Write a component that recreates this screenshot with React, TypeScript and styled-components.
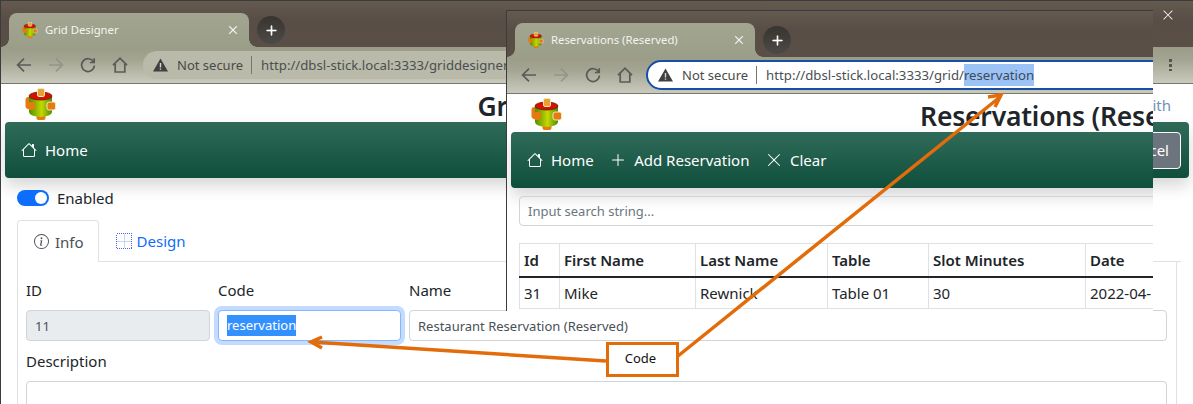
import React from "react";
import styled, { createGlobalStyle } from "styled-components";
import { BsHouse, BsInfoCircle, BsPlusLg, BsXLg } from "react-icons/bs";

const GlobalStyle = createGlobalStyle`
html, body {
    margin: 0;
    background: #fff;
    overflow: hidden;
}
* {
    box-sizing: border-box;
}
`

const Logo = ({ size }: { size: number }) => (
    <svg width={size} height={size} viewBox="0 0 32 32" style={{ flexShrink: 0 }}>
        <defs>
            <linearGradient id="body" x1="0" x2="1" y1="0" y2="0">
                <stop offset="0" stopColor="#4f8f00" />
                <stop offset="0.55" stopColor="#c4d800" />
                <stop offset="1" stopColor="#4a8c08" />
            </linearGradient>
        </defs>
        <rect x="0.5" y="9" width="7" height="12" rx="3" fill="#e57a10" />
        <rect x="11.5" y="26" width="9" height="6" rx="2" fill="#e57a10" />
        <path d="M4 8v16a11.500 5 0 0 0 23 0V8z" fill="url(#body)" />
        <ellipse cx="15.500" cy="8" rx="11.500" ry="4" fill="#d81000" stroke="#5a1000" strokeWidth="0.7" />
        <rect x="12.500" y="0.500" width="7" height="8" rx="1.500" fill="#e8a030" stroke="#f4e8c0" />
        <rect x="3" y="14" width="7" height="8" rx="2" fill="#e57a10" />
        <rect x="22" y="14" width="8.500" height="8" rx="2" fill="#e57a10" stroke="#f4e8c0" />
    </svg>
);

const ChromeIcon = ({ d, faded }: { d: string; faded?: boolean }) => (
    <svg width="18" height="18" viewBox="0 0 18 18" fill="none" stroke={faded ? "#8d8e80" : "#5a5b58"} strokeWidth="1.7" opacity={faded ? 0.75 : 1}>
        <path d={d} />
    </svg>
);

const BACK = "M16 9H3M9 2.6L2.6 9 9 15.4";
const FORWARD = "M2 9h13M9 2.6L15.4 9 9 15.4";
const RELOAD = "M14.6 6A6.4 6.4 0 1 0 15.4 9.5M15.2 2.2v4.3h-4.3";
const HOME = "M2 9.2L9 2.2l7 7M4.2 8v8h9.6V8";

const Warning = () => (
    <svg width="15" height="14" viewBox="0 0 15 14">
        <path d="M7.5 0.5L15 13.5H0z" fill="#3f4042" />
        <path d="M6.8 5h1.4v4.6H6.8zM6.8 10.4h1.4v1.4H6.8z" fill="#d8d8cc" />
    </svg>
);

const DesignIcon = () => (
    <svg width="16" height="16" viewBox="0 0 16 16" fill="none" shapeRendering="crispEdges">
        <rect x="0.5" y="0.5" width="15" height="15" stroke="#4a63f5" strokeDasharray="1 1" />
        <path d="M8 1v14M1 8h14" stroke="#c4d6f4" strokeWidth="1" />
    </svg>
);

const Window = styled.div`
width: 1193px;
height: 404px;
overflow: hidden;
position: relative;
font-family: "Noto Sans", sans-serif;
font-size: 15px;
color: #212529;
border-left: 1px solid #3c3c3c;
border-top: 1px solid #3c3c3c;
background: #fff;
`

const FrontWindow = styled.div`
position: absolute;
left: 505px;
top: 9px;
width: 647px;
height: 301px;
overflow: hidden;
background: #fff;
border-left: 1px solid #3c3c3c;
border-top: 1px solid #3c3c3c;
`

const FrontContent = styled.div`
width: 1108px;
`

const Strip = styled.div`
height: 46px;
display: flex;
align-items: flex-end;
padding-left: 8px;
background: linear-gradient(#635a50, #594e45 40%, #5a4f46);
`

const BrowserTab = styled.div`
position: relative;
width: 240px;
height: 34px;
display: flex;
align-items: center;
gap: 7px;
padding: 0 11px 0 13px;
border-radius: 8px 8px 0 0;
background: linear-gradient(#a2a590, #9b9e89);
color: #f4f4ee;
font-size: 11.3px;
&::before, &::after {
    content: "";
    position: absolute;
    bottom: 0;
    width: 8px;
    height: 8px;
}
&::before {
    left: -8px;
    background: radial-gradient(circle at 0 0, transparent 7.5px, #9b9e89 8px);
}
&::after {
    right: -8px;
    background: radial-gradient(circle at 100% 0, transparent 7.5px, #9b9e89 8px);
}
`

const TabTitle = styled.span`
flex: 1;
padding-bottom: 2px;
white-space: nowrap;
`

const TabClose = styled.span`
display: flex;
color: #fff;
font-size: 10px;
svg {
    stroke: currentColor;
    stroke-width: 0.8px;
}
`

const NewTab = styled.div`
width: 28px;
height: 28px;
margin: 0 0 3px 8px;
border-radius: 50%;
display: flex;
align-items: center;
justify-content: center;
background: linear-gradient(#38342f, #4c4a48);
color: #fff;
font-size: 13px;
svg {
    stroke: currentColor;
    stroke-width: 1px;
}
`

const WindowClose = styled.div`
align-self: flex-start;
display: flex;
margin: 8px 19px 0 auto;
color: #fff;
font-size: 12px;
`

const Toolbar = styled.div<{ $front?: boolean }>`
height: 37px;
display: flex;
align-items: center;
gap: 14px;
padding: 0 0 1px ${p => p.$front ? 13 : 14}px;
background: linear-gradient(#9a9c88, #a3a592 35%, #c9cabc);
border-bottom: 1px solid #77786c;
font-size: 13.2px;
color: #4a4a48;
`

const Omnibox = styled.div<{ $front?: boolean }>`
flex: ${p => p.$front ? "none" : 1};
width: ${p => p.$front ? "700px" : "auto"};
height: ${p => p.$front ? 30 : 28}px;
margin-left: ${p => p.$front ? -2 : 0}px;
display: flex;
align-items: center;
padding-left: 10px;
border-radius: 15px;
background: ${p => p.$front ? "#fff" : "#b9baa9"};
border: ${p => p.$front ? "2px solid #174ea6" : "none"};
white-space: nowrap;
`

const NotSecure = styled.span`
margin-left: 9px;
padding-right: 8px;
margin-right: 9px;
border-right: 1px solid #77786c;
line-height: 18px;
font-size: 13px;
`

const UrlPart = styled.span`
color: #4a4f52;
`

const UrlSelected = styled.span`
color: #3d4a5a;
background: #9cc3f5;
line-height: 22px;
`

const MenuDots = styled.div`
margin: 0 21px 0 12px;
width: 3px;
height: 13px;
background: radial-gradient(circle, #55564f 1.5px, transparent 1.6px) 0 0 / 3px 5px;
`

const PageHeader = styled.div`
height: 38px;
display: grid;
grid-template-columns: 1fr auto 1fr;
align-items: center;
padding-left: 24px;
`

const PageTitle = styled.h1<{ $front?: boolean }>`
margin: ${p => p.$front ? "4px 0 0" : "4px 88px 0 0"};
font-size: 26.500px;
font-weight: 600;
white-space: nowrap;
letter-spacing: -0.2px;
`

const HeaderLink = styled.span`
justify-self: end;
margin: 2px 22px 0 0;
font-size: 15px;
color: #6f92b2;
`

const NavBar = styled.nav`
height: 56px;
margin: 0 4px;
padding: 0 8px 0 16px;
display: flex;
align-items: center;
gap: 16.5px;
border-radius: 4px;
color: #fff;
background: linear-gradient(#2f6b58, #0f4f3c);
box-shadow: 0 8px 16px rgba(0, 0, 0, 0.16);
`

const NavItem = styled.span`
display: flex;
align-items: center;
gap: 8px;
white-space: nowrap;
svg {
    font-size: 16px;
}
`

const CancelButton = styled.button`
margin-left: auto;
height: 37px;
padding: 0 11px;
border: 1px solid #fff;
border-radius: 4px;
background: #6c757d;
color: #fff;
font: inherit;
`

const SearchBox = styled.div`
height: 30px;
margin: 8px 12px 17px;
padding: 0 8px;
display: flex;
align-items: center;
border: 1px solid #ced4da;
border-radius: 4px;
color: #6c757d;
font-size: 13px;
`

const ResultTable = styled.table`
margin-left: 12px;
border-collapse: collapse;
table-layout: fixed;
width: 760px;
th, td {
    border: 1px solid #dee2e6;
    padding: 0 4px;
    text-align: left;
    white-space: nowrap;
}
th {
    height: 33px;
    font-weight: 600;
    border-bottom: 2px solid #212529;
}
td {
    height: 32px;
}
`

const Form = styled.div`
padding: 0 12px 0 16px;
`

const EnabledRow = styled.div`
display: flex;
align-items: center;
gap: 8px;
height: 16px;
margin: 12px 0 14px;
`

const Toggle = styled.span`
width: 32px;
height: 16px;
padding: 2px;
display: flex;
justify-content: flex-end;
border-radius: 8px;
background: #0d6efd;
&::after {
    content: "";
    width: 12px;
    height: 12px;
    border-radius: 50%;
    background: #fff;
}
`

const TabRow = styled.div`
height: 42px;
display: flex;
border-bottom: 1px solid #dee2e6;
`

const PageTab = styled.div<{ $active?: boolean }>`
height: ${p => p.$active ? 42 : 41}px;
display: flex;
align-items: center;
gap: ${p => p.$active ? 6 : 5}px;
padding: 0 14px 0 16px;
color: ${p => p.$active ? "#495057" : "#0d6efd"};
background: #fff;
border: 1px solid ${p => p.$active ? "#dee2e6" : "transparent"};
border-bottom: none;
border-radius: 4px 4px 0 0;
`

const TabPane = styled.div`
height: 200px;
padding: 17px 9px 0 8px;
margin-right: 4px;
border: 1px solid #dee2e6;
border-top: none;
`

const FieldGrid = styled.div`
display: grid;
grid-template-columns: 184px 183px 1fr;
column-gap: 8px;
margin-bottom: 9px;
`

const Field = styled.div`
display: flex;
flex-direction: column;
gap: 9px;
`

const Label = styled.label`
height: 22px;
line-height: 22px;
`

const InputBox = styled.div<{ $state?: "disabled" | "focus" }>`
height: 31px;
padding: 0 8px;
display: flex;
align-items: center;
font-size: 13px;
border-radius: 4px;
border: 1px solid ${p => p.$state === "focus" ? "#86b7fe" : "#ced4da"};
background: ${p => p.$state === "disabled" ? "#e9ecef" : "#fff"};
box-shadow: ${p => p.$state === "focus" ? "0 0 0 4px rgba(13, 110, 253, 0.25)" : "none"};
color: #495057;
`

const Selected = styled.span`
background: #3390ff;
color: #fff;
line-height: 21px;
`

const DescriptionBox = styled.div`
height: 60px;
border: 1px solid #ced4da;
border-radius: 4px;
`

const Callout = styled.div`
position: absolute;
left: 605px;
top: 341px;
width: 73px;
height: 35px;
padding: 0 4px 3px 0;
display: flex;
align-items: center;
justify-content: center;
background: #fff;
border: 3px solid #e36c0a;
color: #111;
font-size: 13px;
`

const ArrowLayer = styled.svg`
position: absolute;
left: -1px;
top: -1px;
`

const CloseIcon = () => <TabClose><BsXLg /></TabClose>;

const NavButtons = () => (
    <>
        <ChromeIcon d={BACK} />
        <ChromeIcon d={FORWARD} faded />
        <ChromeIcon d={RELOAD} />
        <ChromeIcon d={HOME} />
    </>
);

export default function App() {
    return (
        <>
            <GlobalStyle />
            <Window>
                <Strip>
                    <BrowserTab>
                        <Logo size={16} />
                        <TabTitle>Grid Designer</TabTitle>
                        <CloseIcon />
                    </BrowserTab>
                    <NewTab><BsPlusLg /></NewTab>
                    <WindowClose><BsXLg /></WindowClose>
                </Strip>
                <Toolbar>
                    <NavButtons />
                    <Omnibox>
                        <Warning />
                        <NotSecure>Not secure</NotSecure>
                        <UrlPart>http://dbsl-stick.local:3333/griddesigner</UrlPart>
                    </Omnibox>
                    <MenuDots />
                </Toolbar>
                <PageHeader>
                    <Logo size={32} />
                    <PageTitle>Grid Designer</PageTitle>
                    <HeaderLink>with</HeaderLink>
                </PageHeader>
                <NavBar>
                    <NavItem><BsHouse />Home</NavItem>
                    <CancelButton>Cancel</CancelButton>
                </NavBar>
                <Form>
                    <EnabledRow><Toggle />Enabled</EnabledRow>
                    <TabRow>
                        <PageTab $active><BsInfoCircle />Info</PageTab>
                        <PageTab><DesignIcon />Design</PageTab>
                    </TabRow>
                    <TabPane>
                        <FieldGrid>
                            <Field>
                                <Label>ID</Label>
                                <InputBox $state="disabled">11</InputBox>
                            </Field>
                            <Field>
                                <Label>Code</Label>
                                <InputBox $state="focus"><Selected>reservation</Selected></InputBox>
                            </Field>
                            <Field>
                                <Label>Name</Label>
                                <InputBox>Restaurant Reservation (Reserved)</InputBox>
                            </Field>
                        </FieldGrid>
                        <Field>
                            <Label>Description</Label>
                            <DescriptionBox />
                        </Field>
                    </TabPane>
                </Form>

                <FrontWindow>
                    <FrontContent>
                        <Strip>
                            <BrowserTab>
                                <Logo size={16} />
                                <TabTitle>Reservations (Reserved)</TabTitle>
                                <CloseIcon />
                            </BrowserTab>
                            <NewTab><BsPlusLg /></NewTab>
                        </Strip>
                        <Toolbar $front>
                            <NavButtons />
                            <Omnibox $front>
                                <Warning />
                                <NotSecure>Not secure</NotSecure>
                                <UrlPart>http://dbsl-stick.local:3333/grid/</UrlPart>
                                <UrlSelected>reservation</UrlSelected>
                            </Omnibox>
                        </Toolbar>
                        <PageHeader>
                            <Logo size={32} />
                            <PageTitle $front>Reservations (Reserved)</PageTitle>
                        </PageHeader>
                        <NavBar>
                            <NavItem><BsHouse />Home</NavItem>
                            <NavItem><BsPlusLg />Add Reservation</NavItem>
                            <NavItem><BsXLg />Clear</NavItem>
                        </NavBar>
                        <SearchBox>Input search string...</SearchBox>
                        <ResultTable>
                            <colgroup>
                                <col width="40" />
                                <col width="136" />
                                <col width="132" />
                                <col width="101" />
                                <col width="157" />
                                <col width="194" />
                            </colgroup>
                            <thead>
                                <tr><th>Id</th><th>First Name</th><th>Last Name</th><th>Table</th><th>Slot Minutes</th><th>Date</th></tr>
                            </thead>
                            <tbody>
                                <tr><td>31</td><td>Mike</td><td>Rewnick</td><td>Table 01</td><td>30</td><td>2022-04-</td></tr>
                            </tbody>
                        </ResultTable>
                    </FrontContent>
                </FrontWindow>

                <ArrowLayer width="1193" height="404" fill="none" stroke="#e36c0a" strokeWidth="3.5">
                    <path d="M606 361L312 342M322 337l-11 5 11 6" />
                    <path d="M678 356L1000 97M988 97l13-2-6 12" />
                </ArrowLayer>
                <Callout>Code</Callout>
            </Window>
        </>
    );
}
